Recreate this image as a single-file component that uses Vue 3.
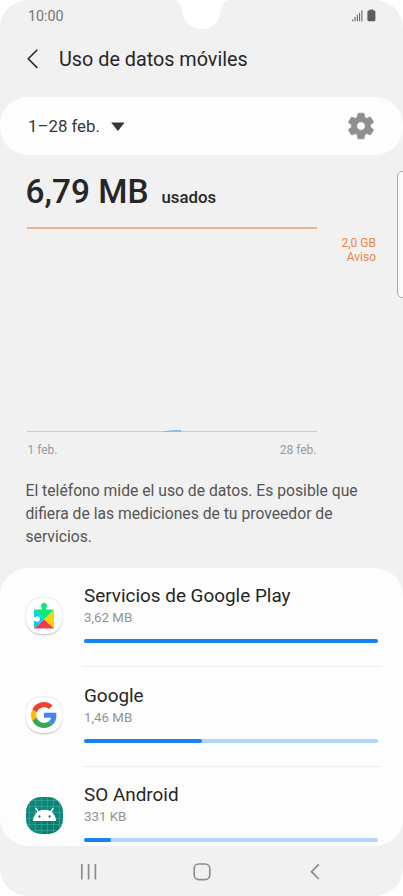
<script setup>
const apps = [
  { name: 'Servicios de Google Play', used: '3,62 MB', share: 100, icon: 'play' },
  { name: 'Google', used: '1,46 MB', share: 40, icon: 'google' },
  { name: 'SO Android', used: '331 KB', share: 9.1, icon: 'android' },
]
const signalBars = [2, 4.5, 6.5, 8.5, 11]
const gridLines = [3.5, 9.5, 15.5, 21.5, 27.5, 33.5]
</script>

<template>
  <main class="phone">
    <svg class="notch" viewBox="0 0 60 30">
      <path d="M0 0C6 0 10 3 11 11C12.500 22 20 29 30.500 29C41 29 48.500 22 50 11C51 3 55 0 60 0Z" fill="#fff" />
    </svg>
    <div class="edge-panel"></div>

    <div class="status">
      <span class="clock">10:00</span>
      <span class="indicators">
        <svg width="11" height="12" viewBox="0 0 11 12">
          <rect v-for="(h, i) in signalBars" :key="i" :x="i * 2.3 + 0.2" :y="11.3 - h" width="1" :height="h" fill="#5c5c5c" />
        </svg>
        <svg width="9" height="13" viewBox="0 0 9 13">
          <path d="M2.600 0.500H6.200V1.600H7.300Q8.400 1.600 8.400 2.700V11.100Q8.400 12.200 7.300 12.200H1.500Q0.400 12.200 0.400 11.100V2.700Q0.400 1.600 1.500 1.600H2.600Z" fill="#5c5c5c" />
        </svg>
      </span>
    </div>

    <header class="header">
      <svg width="12" height="20" viewBox="0 0 12 20">
        <path d="M10.300 0.700L1.300 9.800L10.300 18.900" fill="none" stroke="#2b2b2b" stroke-width="1.600" />
      </svg>
      <h1>Uso de datos móviles</h1>
    </header>

    <section class="period">
      <span class="range">1–28 feb.</span>
      <svg class="caret" width="14" height="10" viewBox="0 0 14 10"><path d="M0.200 0.400H13.600L6.900 9Z" fill="#363636" /></svg>
      <svg class="gear" width="32" height="32" viewBox="0 0 24 24">
        <path d="M19.140 12.940c.04-.3.06-.61.06-.94 0-.32-.02-.64-.07-.94l2.030-1.580c.18-.14.23-.41.12-.61l-1.920-3.320c-.12-.22-.37-.29-.59-.22l-2.390.96c-.5-.38-1.030-.7-1.620-.94l-.36-2.540c-.04-.24-.24-.41-.48-.41h-3.840c-.24 0-.43.17-.47.41l-.36 2.540c-.59.24-1.130.57-1.620.94l-2.390-.96c-.22-.08-.47 0-.59.22L2.740 8.870c-.12.21-.08.47.12.61l2.030 1.580c-.05.3-.09.63-.09.94s.02.64.07.94l-2.030 1.580c-.18.14-.23.41-.12.61l1.920 3.320c.12.22.37.29.59.22l2.390-.96c.5.38 1.030.7 1.620.94l.36 2.540c.05.24.24.41.48.41h3.840c.24 0 .44-.17.47-.41l.36-2.540c.59-.24 1.130-.56 1.620-.94l2.390.96c.22.08.47 0 .59-.22l1.920-3.320c.12-.22.07-.47-.12-.61l-2.010-1.580zM12 15.200a3.200 3.200 0 1 1 0-6.400a3.200 3.200 0 0 1 0 6.400z" fill="#8f8f8f" stroke="#8f8f8f" stroke-width=".5" />
      </svg>
    </section>

    <section class="usage">
      <p class="total"><strong>6,79 MB</strong><span>usados</span></p>
      <div class="chart">
        <div class="plot">
          <svg width="24" height="3" viewBox="0 0 24 3"><path d="M0 2.500L12 1.200H20V2.500Z" fill="#6ba4ec" /></svg>
        </div>
        <div class="warning">2,0 GB<br>Aviso</div>
      </div>
      <div class="axis"><span>1 feb.</span><span>28 feb.</span></div>
      <p class="note">El teléfono mide el uso de datos. Es posible que difiera de las mediciones de tu proveedor de servicios.</p>
    </section>

    <section class="apps">
      <article v-for="app in apps" :key="app.name" class="app">
        <div class="tile" :class="app.icon">
          <svg v-if="app.icon === 'play'" width="36" height="36" viewBox="0 0 36 36">
            <path d="M8 11.500H28L18 21.500Z" fill="#06ea7d" />
            <path d="M28 11.500V30.500L18 21.500Z" fill="#ffcf09" />
            <path d="M8 30.500L18 21.500L28 30.500Z" fill="#ef3b4b" />
            <path d="M8 11.500L18 21.500L8 30.500Z" fill="#0bcbf5" />
            <path d="M15.800 12V9.800A2.900 2.900 0 1 1 20.200 9.800V12Z" fill="#06ea7d" />
            <path d="M7.500 19H9.500A2.700 2.700 0 1 1 9.500 23H7.500Z" fill="#fff" />
          </svg>
          <svg v-else-if="app.icon === 'google'" width="26" height="26" viewBox="0 0 48 48">
            <path fill="#ea4335" d="M24 9.500c3.540 0 6.710 1.220 9.210 3.600l6.850-6.850C35.900 2.380 30.470 0 24 0 14.620 0 6.510 5.380 2.560 13.220l7.980 6.190C12.430 13.720 17.740 9.500 24 9.500z" />
            <path fill="#4285f4" d="M46.980 24.550c0-1.570-.15-3.090-.38-4.550H24v9.020h12.940c-.58 2.960-2.260 5.480-4.780 7.180l7.730 6c4.510-4.180 7.090-10.360 7.090-17.650z" />
            <path fill="#fbbc05" d="M10.530 28.590c-.48-1.450-.76-2.990-.76-4.590s.27-3.140.76-4.590l-7.980-6.190C.92 16.460 0 20.120 0 24c0 3.880.92 7.540 2.560 10.780l7.970-6.190z" />
            <path fill="#34a853" d="M24 48c6.480 0 11.930-2.130 15.890-5.810l-7.730-6c-2.150 1.450-4.920 2.300-8.160 2.300-6.260 0-11.570-4.220-13.470-9.910l-7.980 6.190C6.510 42.620 14.620 48 24 48z" />
          </svg>
          <svg v-else width="37" height="37" viewBox="0 0 37 37">
            <path d="M7 24L30 24L37 31V37H19Z" fill="#087769" opacity=".55" />
            <g stroke="#3ea498" stroke-width=".7">
              <template v-for="p in gridLines" :key="p">
                <path :d="`M${p} 0V37M0 ${p}H37`" />
              </template>
            </g>
            <path d="M7 24A11.500 11.300 0 0 1 30 24Z" fill="#fff" />
            <path d="M9.700 10.800L13 16M27.300 10.800L24 16" stroke="#fff" stroke-width="1.500" />
            <circle cx="13.400" cy="19.500" r="1.150" fill="#087f70" />
            <circle cx="23.600" cy="19.500" r="1.150" fill="#087f70" />
          </svg>
        </div>
        <div class="details">
          <h2>{{ app.name }}</h2>
          <p>{{ app.used }}</p>
          <div class="bar"><div class="fill" :style="{ width: app.share + '%' }"></div></div>
        </div>
      </article>
    </section>

    <nav class="nav">
      <svg width="18" height="18" viewBox="0 0 18 18"><path d="M1.800 1V16.500M8.600 1V16.500M15.400 1V16.500" stroke="#8c8c8c" stroke-width="1.700" /></svg>
      <svg width="18" height="18" viewBox="0 0 18 18"><rect x="1.200" y="1" width="15.600" height="15.600" rx="4.500" fill="none" stroke="#8c8c8c" stroke-width="1.600" /></svg>
      <svg width="18" height="18" viewBox="0 0 18 18"><path d="M12.800 1.400L5.500 8.700L12.800 16" fill="none" stroke="#8c8c8c" stroke-width="1.700" /></svg>
    </nav>
  </main>
</template>

<style>
body { margin: 0; background: #fff; }
</style>

<style scoped>
* { box-sizing: border-box; }
h1, h2, p { margin: 0; font-weight: 400; }
svg { display: block; flex: none; }
.phone {
  position: relative;
  width: 403px;
  height: 896px;
  overflow: hidden;
  display: flex;
  flex-direction: column;
  background: #f1f1f1;
  border-radius: 28px;
  font-family: Roboto, sans-serif;
  color: #262626;
}
.notch { position: absolute; top: 0; left: 171px; width: 60px; height: 30px; }
.edge-panel {
  position: absolute;
  top: 171px;
  right: -6px;
  width: 12px;
  height: 127px;
  border: 1px solid #aaa;
  border-radius: 5px;
  background: #fbfbfb;
}
.status {
  height: 32px;
  padding: 0 27px 0 28px;
  display: flex;
  justify-content: space-between;
  align-items: center;
}
.clock { font-size: 14.3px; line-height: 16px; color: #757575; }
.indicators { display: flex; align-items: flex-end; gap: 4px; padding-bottom: 2px; }
.header { height: 64.500px; padding: 0 27px 10px; display: flex; align-items: center; gap: 20px; }
.header h1 { padding-top: 2px; font-size: 19.8px; line-height: 24px; }
.period {
  height: 58.500px;
  padding: 0 26px 0 28px;
  display: flex;
  align-items: center;
  background: #fdfdfd;
  border-radius: 28px;
}
.range { padding-top: 1px; font-size: 16.8px; line-height: 20px; color: #363636; }
.caret { margin: 2px 0 0 11px; }
.gear { margin-left: auto; }
.usage { height: 412.500px; padding: 19px 27px 0 25.500px; }
.total { height: 53px; display: flex; align-items: baseline; gap: 13px; font-weight: 500; }
.total strong { font-size: 33.4px; line-height: 36px; font-weight: 500; }
.total span { font-size: 16.8px; }
.chart { height: 205px; display: flex; justify-content: space-between; padding-left: 1.500px; }
.plot {
  width: 290px;
  border-top: 2px solid #f0b389;
  border-bottom: 1.500px solid #c9cacc;
  display: flex;
  align-items: flex-end;
  padding-left: 134px;
}
.plot svg { margin-bottom: -1px; }
.warning { padding-top: 10px; text-align: right; font-size: 12px; line-height: 13.500px; color: #f08548; }
.axis {
  width: 291px;
  padding: 11px 0 0 2px;
  display: flex;
  justify-content: space-between;
  font-size: 12px;
  line-height: 15px;
  color: #9b9b9b;
}
.note { padding-top: 21px; font-size: 15.7px; line-height: 23px; color: #555; }
.apps {
  height: 278px;
  overflow: hidden;
  padding: 0 21px 0 26px;
  background: #fdfdfd;
  border-radius: 28px;
}
.app { height: 99.650px; display: flex; gap: 20px; }
.tile {
  flex: none;
  width: 36px;
  height: 36px;
  margin-top: 30px;
  border-radius: 15px;
  display: flex;
  align-items: center;
  justify-content: center;
  overflow: hidden;
  background: #fff;
  box-shadow: 0 0.500px 1.500px rgba(0, 0, 0, 0.25);
}
.tile.android { width: 37px; height: 37px; margin-right: -1px; background: #0b8778; box-shadow: none; }
.details { flex: 1; padding: 16.500px 4px 0 2px; border-bottom: 1px solid #ececec; }
.app:last-child .details { border-bottom: 0; }
.details h2 { font-size: 18.9px; line-height: 24px; }
.details p { margin-top: 2px; font-size: 13.3px; line-height: 16px; color: #939393; }
.bar { margin-top: 13px; height: 4px; border-radius: 2px; background: #b3d5f8; }
.fill { height: 100%; border-radius: 2px; background: #1482f0; }
.nav { height: 50.500px; padding: 2px 79px 0 80px; display: flex; align-items: center; justify-content: space-between; }
</style>
